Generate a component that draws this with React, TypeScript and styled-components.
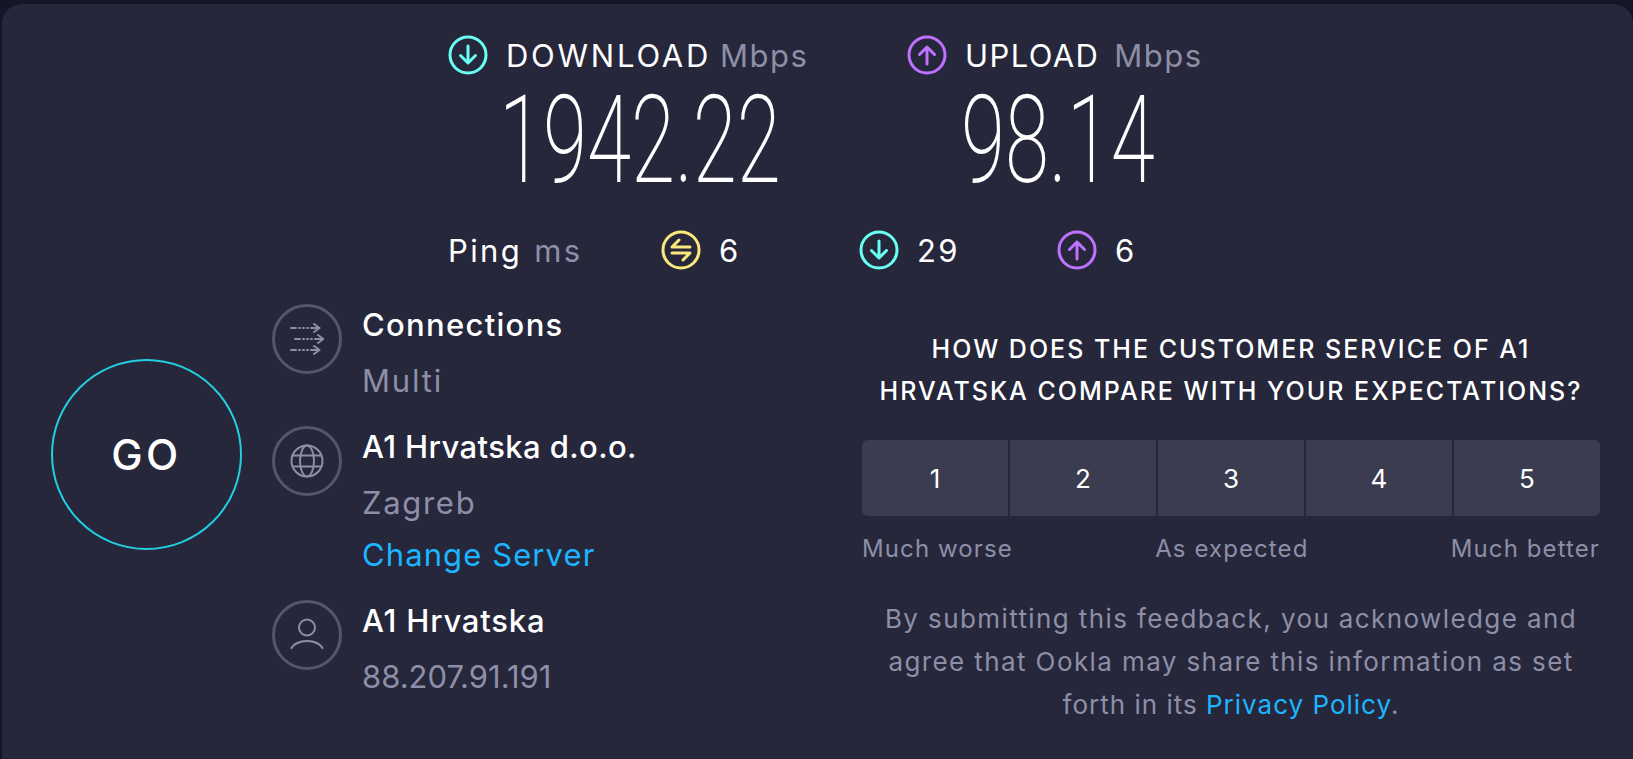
import React from "react";
import styled, { createGlobalStyle } from "styled-components";

const GlobalStyle = createGlobalStyle`
  html, body {
    margin: 0;
    height: 100%;
    overflow: hidden;
    background: #141526;
  }
  body {
    font-family: Inter, "Open Sans", sans-serif;
    color: #fff;
  }
`;

const Panel = styled.main`
  box-sizing: border-box;
  margin: 4px 0 0 2px;
  height: 770px;
  padding: 31px 31px 0 49px;
  background: #26273b;
  border-radius: 20px 20px 0 0;
`;

const Results = styled.section`
  display: flex;
  margin-left: 397px;
`;

const Result = styled.div`
  width: 459px;
`;

const ResultHead = styled.div`
  display: flex;
  align-items: center;
  height: 40px;
  font-size: 31px;
  white-space: nowrap;
`;

const HeadLabel = styled.span<{ $track: number }>`
  margin-left: 18px;
  letter-spacing: ${(p) => p.$track}px;
`;

const Unit = styled.span<{ $gap: number }>`
  margin-left: ${(p) => p.$gap}px;
  letter-spacing: 1.5px;
  color: #8d8fa8;
`;

const SpeedValue = styled.div<{ $inset: number }>`
  margin: 8px 0 0 ${(p) => p.$inset}px;
  height: 115px;
  font-family: Roboto, sans-serif;
  font-weight: 200;
  font-size: 122px;
  line-height: 115px;
  white-space: nowrap;
  transform: scaleX(0.655);
  transform-origin: left center;
`;

const PingRow = styled.section`
  display: flex;
  align-items: center;
  height: 40px;
  margin: 32px 0 0 397px;
  font-size: 31px;
  letter-spacing: 2.4px;
`;

const PingLabel = styled.div`
  width: 213px;
`;

const PingUnit = styled.span`
  margin-left: 12px;
  color: #8d8fa8;
`;

const PingCell = styled.div`
  display: flex;
  align-items: center;
  gap: 18px;
  width: 198px;
`;

const Bottom = styled.section`
  display: flex;
  margin-top: 37px;
`;

const GoColumn = styled.div`
  display: flex;
  align-items: flex-start;
  width: 221px;
  padding-top: 52px;
`;

const GoButton = styled.button`
  width: 191px;
  height: 191px;
  padding: 0;
  border: 2px solid #22cfe0;
  border-radius: 50%;
  background: transparent;
  color: #fff;
  font-family: inherit;
  font-size: 42px;
  font-weight: 500;
  letter-spacing: 3.5px;
`;

const ServerColumn = styled.div`
  display: flex;
  flex-direction: column;
  gap: 30px;
  width: 590px;
`;

const ServerRow = styled.div`
  display: flex;
  gap: 20px;
`;

const IconRing = styled.div`
  display: flex;
  align-items: center;
  justify-content: center;
  box-sizing: border-box;
  width: 70px;
  height: 70px;
  margin-top: -3px;
  border: 3px solid #55566a;
  border-radius: 50%;
  color: #8d8fa8;
`;

const ServerTitle = styled.div<{ $track: number }>`
  font-size: 31px;
  font-weight: 500;
  line-height: 36px;
  letter-spacing: ${(p) => p.$track}px;
`;

const ServerSub = styled.div<{ $track: number }>`
  margin-top: 20px;
  font-size: 31px;
  line-height: 36px;
  letter-spacing: ${(p) => p.$track}px;
  color: #8d8fa8;
`;

const ServerLink = styled.a`
  display: block;
  margin-top: 16px;
  font-size: 31px;
  line-height: 36px;
  letter-spacing: 1.1px;
  color: #1cb5ff;
`;

const Survey = styled.div`
  width: 738px;
  padding-top: 21px;
`;

const Question = styled.h2`
  margin: 0;
  font-size: 25px;
  font-weight: 500;
  line-height: 42px;
  letter-spacing: 2px;
  text-align: center;
  white-space: nowrap;
`;

const Scale = styled.div`
  display: grid;
  grid-template-columns: repeat(5, 1fr);
  gap: 2px;
  height: 76px;
  margin-top: 28px;
`;

const ScaleButton = styled.button`
  padding: 0;
  border: 0;
  background: #3b3c50;
  color: #fff;
  font-family: inherit;
  font-size: 26px;
  &:first-child {
    border-radius: 6px 0 0 6px;
  }
  &:last-child {
    border-radius: 0 6px 6px 0;
  }
`;

const ScaleLabels = styled.div`
  display: flex;
  justify-content: space-between;
  margin-top: 18px;
  font-size: 24px;
  line-height: 30px;
  letter-spacing: 1.1px;
  color: #8d8fa8;
`;

const Notice = styled.p`
  margin: 33px 0 0;
  font-size: 26px;
  line-height: 43px;
  letter-spacing: 1.4px;
  text-align: center;
  white-space: nowrap;
  color: #8d8fa8;
`;

const NoticeTail = styled.span`
  letter-spacing: 1px;
`;

const NoticeLink = styled.a`
  color: #1cb5ff;
`;

const DirectionIcon: React.FC<{ color: string; up?: boolean }> = ({ color, up }) => (
  <svg width="40" height="40" viewBox="0 0 40 40" fill="none" stroke={color} strokeWidth="3" strokeLinecap="round" strokeLinejoin="round">
    <circle cx="20" cy="20" r="18" />
    {up ? <path d="M20 29V12M12.5 19.5L20 12l7.5 7.5" /> : <path d="M20 11v17M12.5 20.5L20 28l7.5-7.5" />}
  </svg>
);

const PingIcon = () => (
  <svg width="40" height="40" viewBox="0 0 40 40" fill="none" stroke="#fbe87c" strokeWidth="3" strokeLinecap="round" strokeLinejoin="round">
    <circle cx="20" cy="20" r="18" />
    <path d="M29 17H11l7-7M11 23h18l-7 7" />
  </svg>
);

const ConnectionsIcon = () => (
  <svg width="34" height="32" viewBox="0 0 34 32" fill="none" stroke="currentColor" strokeWidth="2" strokeLinecap="round" strokeLinejoin="round">
    <path d="M1 5h5M9 5h1M13 5h1M17 5h1M21 5h8.500M24 1l5.500 4-5.500 4" />
    <path d="M5 16h5M13 16h1M17 16h1M21 16h1M25 16h8M28 12l5.500 4-5.500 4" />
    <path d="M1 27h5M9 27h1M13 27h1M17 27h1M21 27h8.500M24 23l5.500 4-5.500 4" />
  </svg>
);

const GlobeIcon = () => (
  <svg width="34" height="34" viewBox="0 0 34 34" fill="none" stroke="currentColor" strokeWidth="2">
    <circle cx="17" cy="17" r="15.5" />
    <ellipse cx="17" cy="17" rx="7" ry="15.5" />
    <path d="M2.500 11.500h29M2.500 22.500h29" />
  </svg>
);

const UserIcon = () => (
  <svg width="34" height="34" viewBox="0 0 34 34" fill="none" stroke="currentColor" strokeWidth="2" strokeLinecap="round">
    <circle cx="17" cy="9.500" r="8" />
    <path d="M1.500 30c2-4 8-7 15.500-7s13.500 3 15.500 7" />
  </svg>
);

const App: React.FC = () => (
  <>
    <GlobalStyle />
    <Panel>
      <Results>
        <Result>
          <ResultHead>
            <DirectionIcon color="#6afff3" />
            <HeadLabel $track={2.75}>DOWNLOAD</HeadLabel>
            <Unit $gap={9}>Mbps</Unit>
          </ResultHead>
          <SpeedValue $inset={51}>1942.22</SpeedValue>
        </Result>
        <Result>
          <ResultHead>
            <DirectionIcon color="#bf71ff" up />
            <HeadLabel $track={1.4}>UPLOAD</HeadLabel>
            <Unit $gap={15}>Mbps</Unit>
          </ResultHead>
          <SpeedValue $inset={54}>98.14</SpeedValue>
        </Result>
      </Results>

      <PingRow>
        <PingLabel>
          Ping<PingUnit>ms</PingUnit>
        </PingLabel>
        <PingCell>
          <PingIcon />6
        </PingCell>
        <PingCell>
          <DirectionIcon color="#6afff3" />29
        </PingCell>
        <PingCell>
          <DirectionIcon color="#bf71ff" up />6
        </PingCell>
      </PingRow>

      <Bottom>
        <GoColumn>
          <GoButton>GO</GoButton>
        </GoColumn>
        <ServerColumn>
          <ServerRow>
            <IconRing>
              <ConnectionsIcon />
            </IconRing>
            <div>
              <ServerTitle $track={1.3}>Connections</ServerTitle>
              <ServerSub $track={1.8}>Multi</ServerSub>
            </div>
          </ServerRow>
          <ServerRow>
            <IconRing>
              <GlobeIcon />
            </IconRing>
            <div>
              <ServerTitle $track={0.4}>A1 Hrvatska d.o.o.</ServerTitle>
              <ServerSub $track={1.7}>Zagreb</ServerSub>
              <ServerLink>Change Server</ServerLink>
            </div>
          </ServerRow>
          <ServerRow>
            <IconRing>
              <UserIcon />
            </IconRing>
            <div>
              <ServerTitle $track={0.8}>A1 Hrvatska</ServerTitle>
              <ServerSub $track={0}>88.207.91.191</ServerSub>
            </div>
          </ServerRow>
        </ServerColumn>
        <Survey>
          <Question>
            HOW DOES THE CUSTOMER SERVICE OF A1
            <br />
            HRVATSKA COMPARE WITH YOUR EXPECTATIONS?
          </Question>
          <Scale>
            {[1, 2, 3, 4, 5].map((n) => (
              <ScaleButton key={n}>{n}</ScaleButton>
            ))}
          </Scale>
          <ScaleLabels>
            <span>Much worse</span>
            <span>As expected</span>
            <span>Much better</span>
          </ScaleLabels>
          <Notice>
            By submitting this feedback, you acknowledge and
            <br />
            agree that Ookla may share this information as set
            <br />
            <NoticeTail>
              forth in its <NoticeLink>Privacy Policy</NoticeLink>.
            </NoticeTail>
          </Notice>
        </Survey>
      </Bottom>
    </Panel>
  </>
);

export default App;
